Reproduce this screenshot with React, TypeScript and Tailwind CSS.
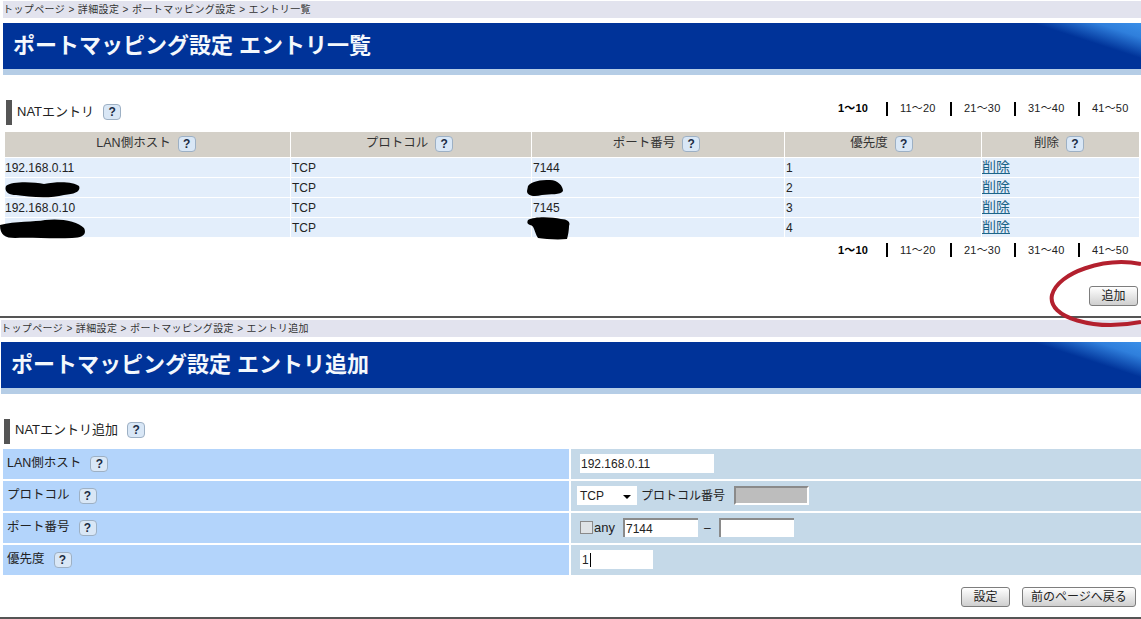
const font = "font-['Liberation_Sans','Noto_Sans_CJK_JP',sans-serif]";

function Help() {
  return (
    <span className="inline-flex h-[16px] w-[18px] shrink-0 items-center justify-center rounded-[4px] border border-[#9db0c4] bg-[#d9e7f6] text-[12px] leading-none font-bold text-[#1c2c44]">
      ?
    </span>
  );
}

function Breadcrumb({ current }: { current: string }) {
  return (
    <div className="flex h-[17px] items-center bg-[#e2e3ee] text-[10px] tracking-[0.4px] whitespace-pre text-[#333]">
      トップページ &gt; 詳細設定 &gt; ポートマッピング設定 &gt; {current}
    </div>
  );
}

function TitleBar({ title }: { title: string }) {
  return (
    <div className="mt-[5px]">
      <div className="flex h-[46px] items-center bg-[linear-gradient(18deg,#003399_91.5%,#2f7fdc_96.5%,#3a8fe8_100%)] pl-[10px] text-[22px] leading-none font-bold text-[#f4f8fc]">
        {title}
      </div>
      <div className="h-[6px] bg-[#b5cde6]" />
    </div>
  );
}

function SectionHeading({ title }: { title: string }) {
  return (
    <div className="flex h-[25px] items-center gap-[5px]">
      <span className="h-[25px] w-[6px] bg-[#555]" />
      <span className="flex items-center gap-[9px] pb-[2px] text-[13px] text-[#222]">
        {title} <Help />
      </span>
    </div>
  );
}

function Pager() {
  const others = ["11〜20", "21〜30", "31〜40", "41〜50"];
  return (
    <div className="flex items-center justify-end pr-[13px] text-[11px] tracking-[0.2px] text-[#222]">
      <span className="w-[34px] font-bold whitespace-nowrap text-black">1〜10</span>
      {others.map((p) => (
        <span key={p} className="flex items-center">
          <span className="mr-[12px] ml-[14px] h-[14px] w-[2px] bg-black" />
          <span className="w-[36px] whitespace-nowrap">{p}</span>
        </span>
      ))}
    </div>
  );
}

function Blob({ className, d, w, h }: { className: string; d: string; w: number; h: number }) {
  return (
    <svg className={"absolute " + className} width={w} height={h} viewBox={`0 0 ${w} ${h}`}>
      <path d={d} fill="#000" />
    </svg>
  );
}

const columns = "grid grid-cols-[285px_240px_252px_196px_157px] gap-x-[1px]";

const rows = [
  { host: "192.168.0.11", port: "7144", prio: "1" },
  { host: "", port: "", prio: "2" },
  { host: "192.168.0.10", port: "7145", prio: "3" },
  { host: "", port: "", prio: "4" },
];

function NatTable() {
  const heads = ["LAN側ホスト", "プロトコル", "ポート番号", "優先度", "削除"];
  return (
    <div className="ml-[2px] w-[1134px] text-[12px] text-[#222]">
      <div className={columns}>
        {heads.map((h) => (
          <div key={h} className="flex h-[25px] items-center justify-center gap-[7px] bg-[#d4d0c8] pr-[3px] pb-[2px] text-[12.5px] text-[#333]">
            {h} <Help />
          </div>
        ))}
      </div>
      <div className="mt-[1px] flex flex-col gap-[1px]">
        {rows.map((r, i) => (
          <div key={r.prio} className={columns}>
            <div className="relative flex h-[19px] items-center bg-[#e3eefb]">
              {r.host}
              {i === 1 && (
                <Blob className="top-[2px] left-[-1px]" w={76} h={18} d="M2 6 C8 1 30 2 40 4 C55 1 70 2 75 6 C77 11 72 14 60 15 C45 19 25 17 12 15 C4 15 0 11 2 6 Z" />
              )}
              {i === 3 && (
                <Blob className="top-[1px] left-[-5px]" w={86} h={20} d="M0 6 C15 2 35 3 45 1 C60 -1 78 2 84 9 C87 15 83 19 72 19 C50 20 30 18 15 19 C5 19 0 16 0 6 Z" />
              )}
            </div>
            <div className="flex h-[19px] items-center bg-[#e3eefb] pl-[1px]">TCP</div>
            <div className="relative flex h-[19px] items-center bg-[#e3eefb] pl-[1px]">
              {r.port}
              {i === 1 && (
                <Blob className="top-[1px] left-[-6px]" w={38} h={18} d="M2 7 C6 2 14 1 24 1 C32 1 37 7 37 12 C35 16 24 15 16 16 C8 18 1 17 1 12 Z" />
              )}
              {i === 3 && (
                <Blob className="top-[-2px] left-[-5px]" w={44} h={24} d="M1 4 C8 0 25 1 34 3 C40 3 44 6 42 10 C42 14 41 20 40 23 C30 24 18 23 11 22 C7 16 8 10 3 9 C0 8 0 6 1 4 Z" />
              )}
            </div>
            <div className="flex h-[19px] items-center bg-[#e3eefb] pl-[1px]">{r.prio}</div>
            <div className="flex h-[19px] items-center bg-[#e3eefb] text-[14px]">
              <a href="#" className="text-[#1c6488] underline">削除</a>
            </div>
          </div>
        ))}
      </div>
    </div>
  );
}

function Btn({ label, className }: { label: string; className: string }) {
  return (
    <button className={"h-[20px] rounded-[3px] border border-[#7d7d7d] bg-linear-to-b from-white to-[#cfcfcf] text-[12px] text-[#222] " + className}>
      {label}
    </button>
  );
}

function FormRow({ label, children }: { label: string; children: React.ReactNode }) {
  return (
    <div className="grid h-[30px] grid-cols-[566px_1fr] gap-x-[2px]">
      <div className="flex items-center gap-[9px] bg-[#b3d4fb] pl-[4px] text-[12.5px] text-[#222]">
        {label} <Help />
      </div>
      <div className="flex items-center bg-[#c5d9e8] text-[12px] text-[#222]">{children}</div>
    </div>
  );
}

const field = "h-[19px] bg-white px-[1px] text-[12px] text-[#222] outline-none";
const sunken = "border-t-2 border-l-2 border-t-[#8a8a8a] border-l-[#8a8a8a]";

export default function App() {
  return (
    <div className={"relative h-[619px] w-[1141px] overflow-hidden bg-white " + font}>
      {/* エントリ一覧 */}
      <section className="pt-[1px] pl-[3px]">
        <Breadcrumb current="エントリ一覧" />
        <TitleBar title="ポートマッピング設定 エントリ一覧" />
        <div className="mt-[25px] flex items-center justify-between pl-[3px]">
          <SectionHeading title="NATエントリ" />
          <div className="mb-[8px]">
            <Pager />
          </div>
        </div>
        <div className="mt-[7px]">
          <NatTable />
        </div>
        <div className="mt-[5px]">
          <Pager />
        </div>
        <div className="mt-[27px] flex justify-end pr-[3px]">
          <Btn label="追加" className="w-[49px]" />
        </div>
      </section>

      <div className="mt-[10px] h-[2px] bg-[#555]" />

      {/* エントリ追加 */}
      <section className="mt-[2px] pl-[1px]">
        <Breadcrumb current="エントリ追加" />
        <TitleBar title="ポートマッピング設定 エントリ追加" />
        <div className="mt-[25px] pl-[3px]">
          <SectionHeading title="NATエントリ追加" />
        </div>
        <div className="mt-[5px] ml-[2px] flex flex-col gap-[2px]">
          <FormRow label="LAN側ホスト">
            <input readOnly value="192.168.0.11" className={field + " ml-[9px] w-[134px]"} />
          </FormRow>
          <FormRow label="プロトコル">
            <span className="ml-[6px] flex h-[19px] w-[60px] items-center justify-between bg-white pr-[6px] pl-[3px]">
              TCP
              <span className="mt-[2px] h-0 w-0 border-x-[4px] border-t-[4px] border-x-transparent border-t-black" />
            </span>
            <span className="ml-[4px] text-[12px]">プロトコル番号</span>
            <span className={"ml-[9px] h-[19px] w-[75px] border-r-2 border-b-2 border-r-white border-b-white bg-[#bdbdbd] " + sunken} />
          </FormRow>
          <FormRow label="ポート番号">
            <span className="ml-[9px] h-[13px] w-[13px] border border-[#8a8a8a] bg-[#dfe3e6]" />
            <span className="ml-[1px] text-[13px]">any</span>
            <input readOnly value="7144" className={field + " ml-[8px] w-[75px] " + sunken} />
            <span className="mr-[8px] ml-[6px]">–</span>
            <input readOnly value="" className={field + " w-[75px] " + sunken} />
          </FormRow>
          <FormRow label="優先度">
            <span className={field + " ml-[9px] flex w-[73px] items-center pl-[2px]"}>
              1<span className="ml-[1px] h-[14px] w-[1px] bg-black" />
            </span>
          </FormRow>
        </div>
        <div className="mt-[12px] flex justify-end gap-[12px] pr-[5px]">
          <Btn label="設定" className="w-[49px]" />
          <Btn label="前のページへ戻る" className="w-[114px]" />
        </div>
      </section>

      <div className="mt-[10px] h-[2px] bg-[#555]" />

      {/* 赤い丸 */}
      <svg className="absolute top-0 left-0" width={1141} height={619} fill="none">
        <path d="M1141 264 C1105 257 1058 272 1052 295 C1047 318 1095 331 1141 322" stroke="#b3202e" strokeWidth={4} />
      </svg>
    </div>
  );
}
